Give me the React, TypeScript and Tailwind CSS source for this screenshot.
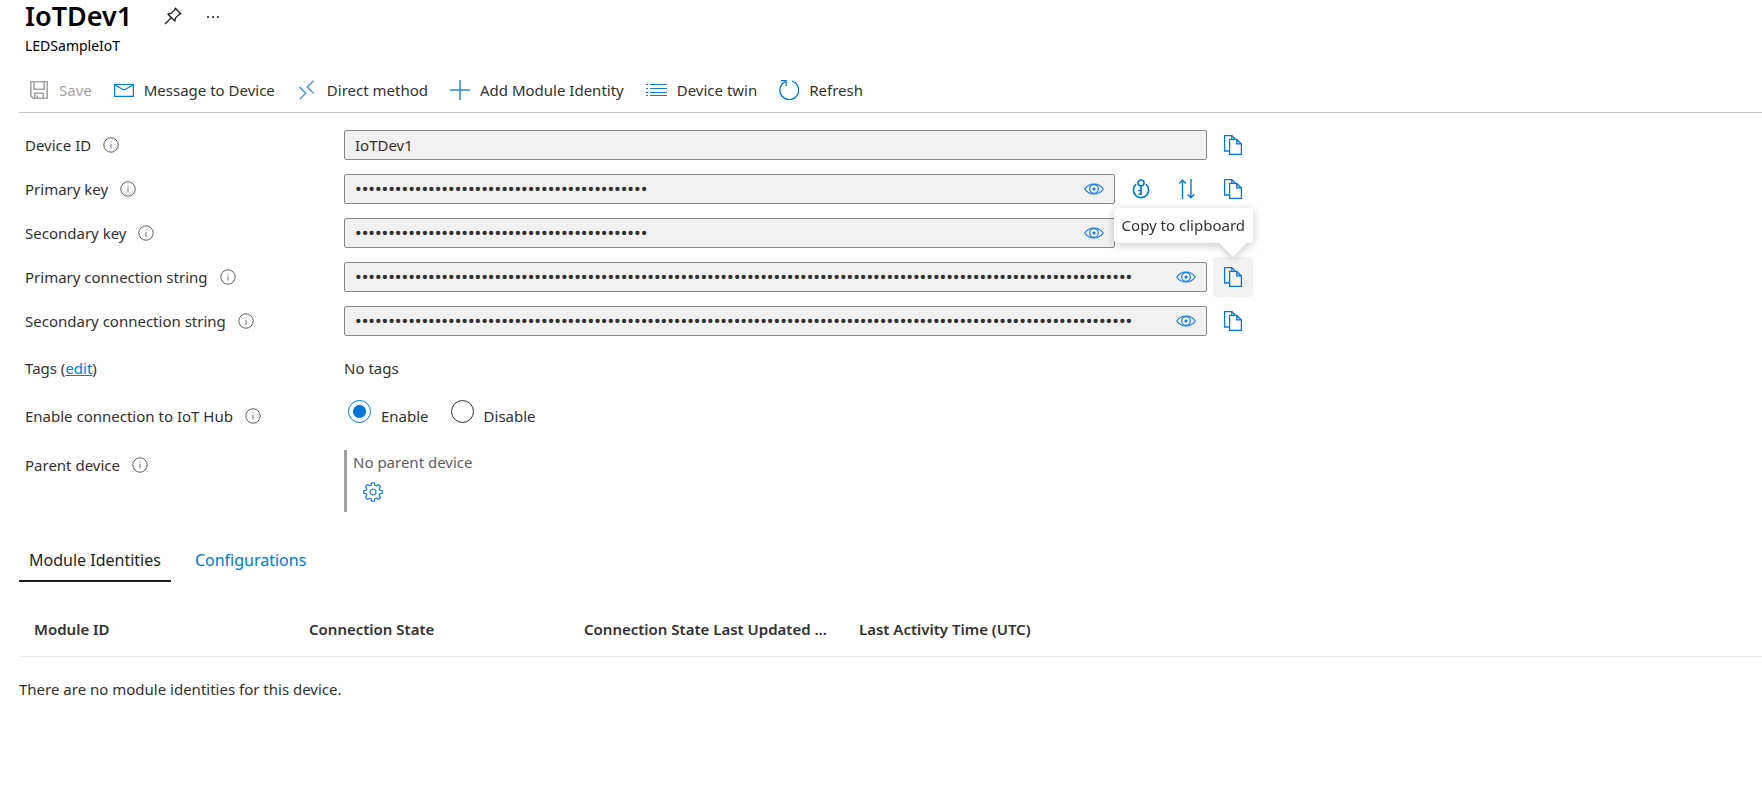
import React, { useId, useState } from "react";

type IconProps = { className?: string };

const PinIcon = () => (
  <svg className="size-[18px]" viewBox="0 0 18 18" fill="none" stroke="#1b1a19" strokeWidth="1.3" strokeLinejoin="round" aria-hidden="true">
    <path d="M11.3 1.2 16.8 6.7 14.9 7.6 11.6 10.9 10.8 14 4 7.2 7.1 6.4 10.4 3.1Z" />
    <path d="M7.4 10.6 1 17" />
  </svg>
);

const SaveIcon = () => (
  <svg className="size-5" viewBox="0 0 20 20" fill="none" stroke="#a8a6a4" strokeWidth="1.6" aria-hidden="true">
    <path d="M1.8 1.8H18.2V18.2H4.3L1.8 15.8Z" />
    <path d="M5 2V9.3H15.2V2" />
    <path d="M5.8 18V13.2H14.2V18M8.4 15.5V18" />
  </svg>
);

const MailIcon = () => (
  <svg className="size-5" viewBox="0 0 20 20" fill="none" stroke="#0078d4" strokeWidth="1.2" aria-hidden="true">
    <path d="M.6 4.5H19.4V16.4H.6Z" />
    <path d="M.8 4.8 7.5 8.8 10 9.8 12.5 8.8 19.2 4.8" />
  </svg>
);

const MethodIcon = () => (
  <svg className="size-5" viewBox="0 0 20 20" fill="none" stroke="#3a86da" strokeWidth="1.3" aria-hidden="true">
    <path d="M16.6.6 10.2 7 16.6 13.4" />
    <path d="M2.600 7 8.800 13.200 2.600 19.400" />
  </svg>
);

const PlusIcon = () => (
  <svg className="size-5" viewBox="0 0 20 20" fill="none" stroke="#2b88d8" strokeWidth="1.5" aria-hidden="true">
    <path d="M10 0V20M0 10H20" />
  </svg>
);

const ListIcon = () => (
  <svg className="h-5 w-[21px]" viewBox="0 0 21 20" fill="none" stroke="#1a7bd6" strokeWidth="1.2" aria-hidden="true">
    <path d="M4 4.5H21M4 8.5H21M4 12.5H21M4 15.5H21" />
    <path d="M0 4.5H2M0 8.5H2M0 12.5H2M0 15.5H2" />
  </svg>
);

const RefreshIcon = () => (
  <svg className="size-5" viewBox="0 0 20 20" fill="none" stroke="#0078d4" strokeWidth="1.3" aria-hidden="true">
    <path d="M13 1.2A9.4 9.4 0 1 1 6.400 1.600" />
    <path d="M1.800.7H7.200V6" />
  </svg>
);

const InfoIcon = () => (
  <svg className="size-4 shrink-0" viewBox="0 0 16 16" fill="none" stroke="#605e5c" aria-hidden="true">
    <circle cx="8" cy="8" r="7.2" strokeWidth="1" />
    <path d="M8 6.8V11.6M8 4.4V5.6" strokeWidth="1.1" stroke="#7c7a90" />
  </svg>
);

const EyeIcon = () => (
  <svg className="h-3 w-5" viewBox="0 0 20 12" fill="none" stroke="#1a7bd6" strokeWidth="1.2" aria-hidden="true">
    <path d="M.7 6C3 2.800 6.200 1 10 1S17 2.800 19.300 6C17 9.200 13.800 11 10 11S3 9.200.7 6Z" />
    <circle cx="10" cy="6" r="4.300" />
    <circle cx="10" cy="6" r="1" fill="#0078d4" />
  </svg>
);

const CopyIcon = () => (
  <svg className="size-5" viewBox="0 0 20 20" fill="none" stroke="#0f74d1" strokeWidth="1.300" aria-hidden="true">
    <path d="M6 16H1.600V.700H8.800L12.300 4" />
    <path d="M6.600 4.300H13.800L18.400 8.900V19.400H6.600Z" />
    <path d="M13.800 4.300V8.900H18.400" fill="#0f74d1" fillOpacity=".35" />
    <path d="M8.800.7V4.300" />
  </svg>
);

const KeyIcon = () => (
  <svg className="size-5" viewBox="0 0 20 20" fill="none" stroke="#0078d4" strokeWidth="1.700" aria-hidden="true">
    <circle cx="10" cy="4" r="3" />
    <path d="M10 7V16M10 11.500H7.300M10 15H7.300" />
    <path d="M5.200 5.200A7.600 7.600 0 1 0 14.800 5.200" />
  </svg>
);

const SwapIcon = () => (
  <svg className="size-5" viewBox="0 0 20 20" fill="none" stroke="#0078d4" strokeWidth="1.400" aria-hidden="true">
    <path d="M5.500 20V1M2.200 4.600 5.500 1.200 8.800 4.600" />
    <path d="M14 0V18.600M10.700 15.400 14 18.800 17.300 15.400" />
  </svg>
);

const GearIcon = ({ className }: IconProps) => (
  <svg className={className} viewBox="0 0 20 20" fill="none" stroke="#1a7bd6" strokeWidth="1.200" strokeLinejoin="round" aria-hidden="true">
    <path d="M8.600.8H11.400L11.900 3.200 13.300 3.800 15.400 2.500 17.500 4.600 16.200 6.700 16.800 8.100 19.200 8.600V11.400L16.800 11.900 16.200 13.300 17.500 15.400 15.400 17.500 13.300 16.200 11.900 16.800 11.400 19.200H8.600L8.100 16.800 6.700 16.200 4.600 17.500 2.500 15.400 3.800 13.300 3.200 11.900.8 11.400V8.600L3.200 8.100 3.800 6.700 2.500 4.600 4.600 2.500 6.700 3.800 8.100 3.200Z" />
    <circle cx="10" cy="10" r="3" />
  </svg>
);

const commands = [
  { label: "Save", icon: <SaveIcon />, disabled: true },
  { label: "Message to Device", icon: <MailIcon /> },
  { label: "Direct method", icon: <MethodIcon /> },
  { label: "Add Module Identity", icon: <PlusIcon /> },
  { label: "Device twin", icon: <ListIcon /> },
  { label: "Refresh", icon: <RefreshIcon /> },
];

const columns = ["Module ID", "Connection State", "Connection State Last Updated ...", "Last Activity Time (UTC)"];

function IconButton({ label, children, active }: { label: string; children: React.ReactNode; active?: boolean }) {
  return (
    <button type="button" aria-label={label} className={`flex size-10 shrink-0 items-center justify-center rounded-sm ${active ? "bg-[#f3f2f1]" : ""}`}>
      {children}
    </button>
  );
}

function CopyButton({ tooltip }: { tooltip?: boolean }) {
  if (!tooltip) return <IconButton label="Copy to clipboard"><CopyIcon /></IconButton>;
  return (
    <div className="relative">
      <IconButton label="Copy to clipboard" active><CopyIcon /></IconButton>
      <div role="tooltip" className="absolute right-0 bottom-full z-10 pb-3.5 drop-shadow-[0_2px_4px_rgba(0,0,0,0.22)]">
        <div className="rounded-sm bg-white px-2 pt-[5px] pb-1.5 text-[15px] leading-6 whitespace-nowrap">Copy to clipboard</div>
        <svg className="absolute right-[6px] bottom-0 h-3.5 w-7" viewBox="0 0 28 14" aria-hidden="true">
          <path d="M0 0H28L14 14Z" fill="#fff" />
        </svg>
      </div>
    </div>
  );
}

function Label({ text, htmlFor }: { text: string; htmlFor?: string }) {
  return (
    <div className="flex w-[319px] shrink-0 items-center gap-3">
      {htmlFor ? <label htmlFor={htmlFor}>{text}</label> : <span>{text}</span>}
      <InfoIcon />
    </div>
  );
}

type FieldProps = { label: string; value: string; secret?: boolean; keyActions?: boolean; tooltip?: boolean };

function Field({ label, value, secret, keyActions, tooltip }: FieldProps) {
  const id = useId();
  const [visible, setVisible] = useState(false);
  const masked = secret && !visible;
  return (
    <div className="flex items-center">
      <Label text={label} htmlFor={id} />
      <div className="flex max-w-[909px] flex-1 items-center gap-1.5">
        <div className="flex h-[30px] min-w-0 flex-1 items-center rounded-xs border border-[#8a8886] bg-[#f2f1f1]">
          <input
            id={id}
            type={masked ? "password" : "text"}
            readOnly
            value={value}
            className={`h-full min-w-0 flex-1 bg-transparent pl-2.5 outline-none ${masked ? "font-['Roboto',sans-serif] text-[19px] font-medium" : "text-[15px]"}`}
          />
          {secret && (
            <button type="button" aria-label={`Show ${label.toLowerCase()}`} onClick={() => setVisible(!visible)} className="flex h-full w-10 items-center justify-center">
              <EyeIcon />
            </button>
          )}
        </div>
        {keyActions && (
          <>
            <IconButton label="Regenerate key"><KeyIcon /></IconButton>
            <IconButton label="Swap keys"><SwapIcon /></IconButton>
          </>
        )}
        <CopyButton tooltip={tooltip} />
      </div>
    </div>
  );
}

function Radio({ label, checked, onChange }: { label: string; checked: boolean; onChange: () => void }) {
  return (
    <label className="flex items-start gap-2.5">
      <input
        type="radio"
        name="hub-connection"
        checked={checked}
        onChange={onChange}
        className="size-[23px] appearance-none rounded-full border border-[#323130] bg-white checked:border-[#0078d4] checked:bg-[radial-gradient(circle,#0078d4_6px,#fff_7px)]"
      />
      <span className="pt-1">{label}</span>
    </label>
  );
}

export default function App() {
  const [enabled, setEnabled] = useState(true);
  return (
    <main className="bg-white pl-[19px] font-['Noto_Sans','Open_Sans',sans-serif] text-[15px] leading-6 text-[#323130]">
      <header className="pl-1.5 text-black">
        <div className="flex h-8 items-center gap-8">
          <h1 className="text-[27px] leading-8 font-semibold">IoTDev1</h1>
          <div className="flex items-center gap-6">
            <button type="button" aria-label="Pin to dashboard"><PinIcon /></button>
            <button type="button" aria-label="More options">
              <svg className="h-[18px] w-4" viewBox="0 0 16 18" fill="#1b1a19" aria-hidden="true">
                <circle cx="2" cy="10" r="1" />
                <circle cx="7" cy="10" r="1" />
                <circle cx="12" cy="10" r="1" />
              </svg>
            </button>
          </div>
        </div>
        <p className="text-sm leading-7">LEDSampleIoT</p>
      </header>

      <div className="flex h-[53px] items-center gap-[22px] border-b border-[#c8c6c4] pt-2 pl-2.5">
        {commands.map((c) => (
          <button key={c.label} type="button" disabled={c.disabled} className="flex items-center gap-2.5 disabled:text-[#a19f9d]">
            {c.icon}
            {c.label}
          </button>
        ))}
      </div>

      <section className="pl-1.5">
        <div className="flex flex-col gap-1 pt-3">
          <Field label="Device ID" value="IoTDev1" />
          <Field label="Primary key" value={"0".repeat(44)} secret keyActions />
          <Field label="Secondary key" value={"0".repeat(44)} secret keyActions />
          <Field label="Primary connection string" value={"0".repeat(117)} secret tooltip />
          <Field label="Secondary connection string" value={"0".repeat(117)} secret />
        </div>
        <div className="flex pt-[15px]">
          <div className="w-[319px] shrink-0">
            Tags (<a href="#tags" className="text-[#0078d4] underline">edit</a>)
          </div>
          <span>No tags</span>
        </div>
        <div className="flex items-end pt-5">
          <Label text="Enable connection to IoT Hub" />
          <div role="radiogroup" aria-label="Enable connection to IoT Hub" className="flex gap-[22px] pl-1">
            <Radio label="Enable" checked={enabled} onChange={() => setEnabled(true)} />
            <Radio label="Disable" checked={!enabled} onChange={() => setEnabled(false)} />
          </div>
        </div>
        <div className="flex items-start pt-[22px]">
          <div className="pt-[3px]"><Label text="Parent device" /></div>
          <div className="flex h-[62px] flex-col items-start gap-1 border-l-[3px] border-[#a19f9d] pl-1.5 text-[#605e5c]">
            <span>No parent device</span>
            <button type="button" aria-label="Set parent device" className="ml-2.5 pt-1">
              <GearIcon className="size-5" />
            </button>
          </div>
        </div>
      </section>

      <div role="tablist" className="flex gap-[14px] pt-[30px] text-base">
        <button type="button" role="tab" aria-selected="true" className="h-10 border-b-2 border-[#201f1e] px-2.5 pb-0.5 text-[#201f1e]">Module Identities</button>
        <button type="button" role="tab" aria-selected="false" className="h-10 border-b-2 border-transparent px-2.5 pb-0.5 text-[#0078d4]">Configurations</button>
      </div>

      <table className="mt-5 w-full table-fixed text-left">
        <thead>
          <tr className="h-[54px] border-b border-[#edebe9]">
            {columns.map((c) => (
              <th key={c} scope="col" className="w-[275px] truncate pr-2 pl-[15px] font-semibold">{c}</th>
            ))}
            <td />
          </tr>
        </thead>
        <tbody>
          <tr>
            <td colSpan={5} className="pt-5">There are no module identities for this device.</td>
          </tr>
        </tbody>
      </table>
    </main>
  );
}
